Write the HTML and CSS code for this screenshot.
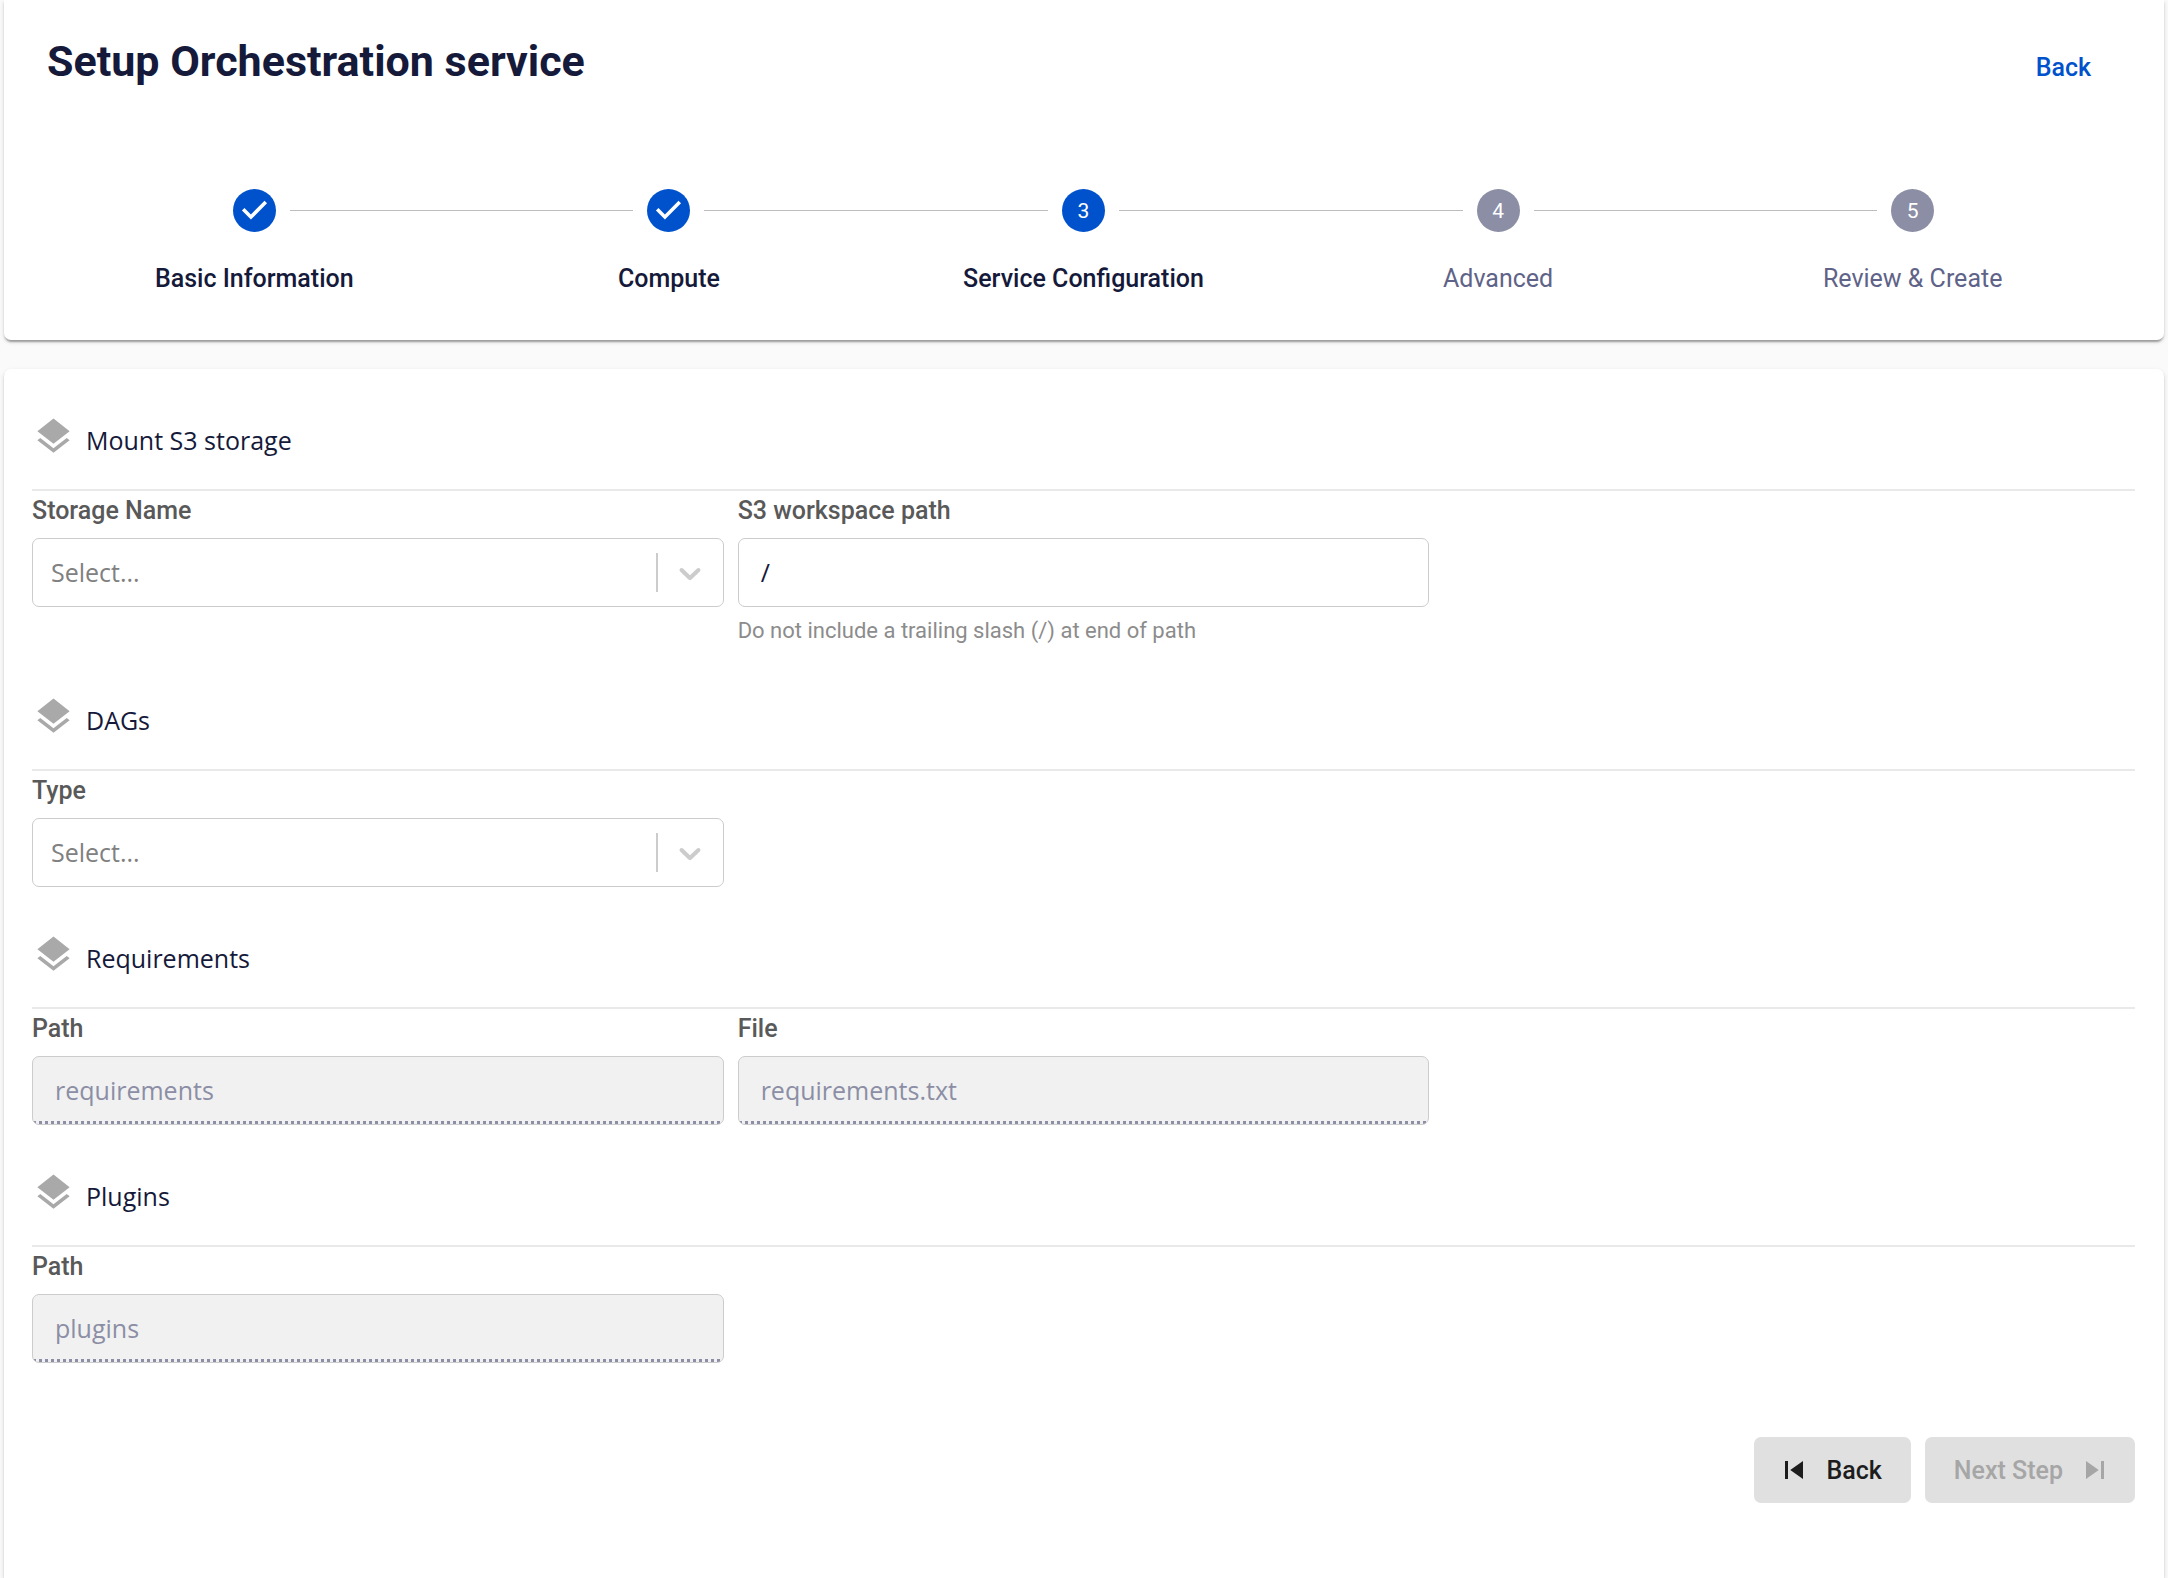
FILE: index.html
```html
<!DOCTYPE html>
<html lang="en">
<head>
    <meta charset="UTF-8">
    <meta name="viewport" content="width=device-width, initial-scale=1.0">
    <title>Setup Orchestration service</title>
    <link rel="stylesheet" href="styles.css">
</head>
<body>
    <!-- shared icons -->
    <svg class="icon-defs" aria-hidden="true">
        <symbol id="icon-layers" viewBox="0 0 24 24">
            <path d="M11.99 18.54l-7.37-5.73L3 14.07l9 7 9-7-1.63-1.27-7.38 5.74zM12 16l7.36-5.73L21 9l-9-7-9 7 1.63 1.27L12 16z"/>
        </symbol>
        <symbol id="icon-chevron" viewBox="0 0 20 20">
            <path d="M4.516 7.548c0.436-0.446 1.043-0.481 1.576 0l3.908 3.747 3.908-3.747c0.533-0.481 1.141-0.446 1.574 0 0.436 0.445 0.408 1.197 0 1.615-0.406 0.418-4.695 4.502-4.695 4.502-0.217 0.223-0.502 0.335-0.787 0.335s-0.57-0.112-0.789-0.335c0 0-4.287-4.084-4.695-4.502s-0.436-1.17 0-1.615z"/>
        </symbol>
        <symbol id="icon-check" viewBox="0 0 24 24">
            <path d="M10 17l-5-5 1.400-1.400 3.600 3.600 7.600-7.600L19 8z"/>
        </symbol>
    </svg>

    <header class="card header">
        <div class="title-row">
            <h1>Setup Orchestration service</h1>
            <a class="back-link" href="#">Back</a>
        </div>

        <ol class="stepper">
            <li class="step done">
                <span class="step-icon"><svg><use href="#icon-check"/></svg></span>
                <span class="step-label">Basic Information</span>
            </li>
            <li class="step done">
                <span class="step-icon"><svg><use href="#icon-check"/></svg></span>
                <span class="step-label">Compute</span>
            </li>
            <li class="step active" aria-current="step">
                <span class="step-icon">3</span>
                <span class="step-label">Service Configuration</span>
            </li>
            <li class="step">
                <span class="step-icon">4</span>
                <span class="step-label">Advanced</span>
            </li>
            <li class="step">
                <span class="step-icon">5</span>
                <span class="step-label">Review &amp; Create</span>
            </li>
        </ol>
    </header>

    <main class="card content">
        <form>
            <section>
                <h2 class="section-title"><svg><use href="#icon-layers"/></svg>Mount S3 storage</h2>
                <div class="fields">
                    <div class="field">
                        <label for="storageName">Storage Name</label>
                        <div class="select-box">
                            <select id="storageName">
                                <option>Select...</option>
                            </select>
                            <span class="indicator"><svg><use href="#icon-chevron"/></svg></span>
                        </div>
                    </div>
                    <div class="field">
                        <label for="workspacePath">S3 workspace path</label>
                        <input type="text" id="workspacePath" value="/" aria-describedby="workspaceHelp">
                        <p class="help" id="workspaceHelp">Do not include a trailing slash (/) at end of path</p>
                    </div>
                </div>
            </section>

            <section>
                <h2 class="section-title"><svg><use href="#icon-layers"/></svg>DAGs</h2>
                <div class="fields">
                    <div class="field">
                        <label for="dagType">Type</label>
                        <div class="select-box">
                            <select id="dagType">
                                <option>Select...</option>
                            </select>
                            <span class="indicator"><svg><use href="#icon-chevron"/></svg></span>
                        </div>
                    </div>
                </div>
            </section>

            <section>
                <h2 class="section-title"><svg><use href="#icon-layers"/></svg>Requirements</h2>
                <div class="fields">
                    <div class="field">
                        <label for="reqPath">Path</label>
                        <input type="text" id="reqPath" value="requirements" disabled>
                    </div>
                    <div class="field">
                        <label for="reqFile">File</label>
                        <input type="text" id="reqFile" value="requirements.txt" disabled>
                    </div>
                </div>
            </section>

            <section>
                <h2 class="section-title"><svg><use href="#icon-layers"/></svg>Plugins</h2>
                <div class="fields">
                    <div class="field">
                        <label for="pluginPath">Path</label>
                        <input type="text" id="pluginPath" value="plugins" disabled>
                    </div>
                </div>
            </section>

            <div class="actions">
                <button type="button" class="btn btn-prev">
                    <svg viewBox="0 0 24 24"><path d="M6 6h2v12H6zm3.500 6l8.500 6V6z"/></svg>
                    Back
                </button>
                <button type="submit" class="btn btn-next" disabled>
                    Next Step
                    <svg viewBox="0 0 24 24"><path d="M6 18l8.500-6L6 6v12zM16 6v12h2V6h-2z"/></svg>
                </button>
            </div>
        </form>
    </main>
</body>
</html>
```

FILE: styles.css
```css
* {
    box-sizing: border-box;
}
body {
    display: flex;
    flex-direction: column;
    min-height: 100vh;
    margin: 0;
    padding: 0 4px;
    background: #fafafa;
    color: #15193a;
    font-family: Roboto, sans-serif;
    font-size: 25px;
}
svg {
    display: block;
    fill: currentColor;
}
.icon-defs {
    display: none;
}
.card {
    background: #fff;
    border-radius: 7px;
    box-shadow: 0 4px 2px -2px rgba(0,0,0,0.2), 0 2px 2px rgba(0,0,0,0.14), 0 2px 5px rgba(0,0,0,0.12);
}

/* header and stepper */
.header {
    margin-bottom: 29px;
    padding: 32px 44px 43px 43px;
    border-radius: 0 0 7px 7px;
}
.title-row {
    display: flex;
    justify-content: space-between;
    align-items: baseline;
    padding-right: 29px;
}
h1 {
    margin: 0;
    font-size: 43px;
    font-weight: 700;
    line-height: 58px;
}
.back-link {
    color: #0052cc;
    font-weight: 500;
    text-decoration: none;
}
.stepper {
    display: flex;
    margin: 99px 0 0;
    padding: 0;
    list-style: none;
}
.step {
    display: grid;
    flex: 1;
    grid-template-columns: 1fr 43px 1fr;
    align-items: center;
    column-gap: 14px;
    row-gap: 29px;
    color: #5f6388;
}
.step::before,
.step::after {
    content: "";
    height: 1px;
    background: #bdbdbd;
}
.step:first-child::before,
.step:last-child::after {
    background: none;
}
.step::before {
    order: 0;
}
.step-icon {
    display: flex;
    order: 1;
    align-items: center;
    justify-content: center;
    height: 43px;
    border-radius: 50%;
    background: #8b8ea5;
    color: #fff;
    font-size: 21px;
}
.step::after {
    order: 2;
}
.step-label {
    order: 3;
    grid-column: 1 / -1;
    line-height: 36px;
    text-align: center;
}
.step-icon svg {
    width: 43px;
    height: 43px;
}
.done,
.active {
    color: #15193a;
    font-weight: 500;
}
.done .step-icon,
.active .step-icon {
    background: #0052cc;
    font-weight: 400;
}

/* form sections */
.content {
    flex: 1;
    padding: 0 29px 64px 28px;
    border-radius: 7px 7px 0 0;
}
.section-title {
    display: flex;
    gap: 11px;
    height: 122px;
    margin: 0;
    padding-top: 46px;
    border-bottom: 2px solid #e9e9e9;
    font-family: "Open Sans", sans-serif;
    font-size: 25px;
    font-weight: 400;
    line-height: 50px;
}
.section-title svg {
    width: 43px;
    height: 43px;
    color: #a9a9a9;
}
.fields {
    display: grid;
    grid-template-columns: repeat(3, 1fr);
    gap: 14px;
}
.field label {
    display: block;
    height: 47px;
    color: #595959;
    font-weight: 500;
    line-height: 40px;
}
.field input,
.field select {
    display: block;
    width: 100%;
    height: 69px;
    border: 1px solid #ccc;
    border-radius: 7px;
    background: #fff;
    color: #15193a;
    font-family: "Open Sans", sans-serif;
    font-size: 25px;
}
.field input {
    padding: 0 22px 2px;
}
.field input:disabled {
    background: #f1f1f1 repeating-linear-gradient(90deg, #8b8ea5 0 3px, #f1f1f1 3px 6px) bottom / 100% 3px no-repeat;
    color: #8b8ea5;
}
.field select {
    padding: 0 80px 2px 18px;
    appearance: none;
    color: #808080;
}
.select-box {
    display: grid;
    align-items: center;
}
.select-box select,
.select-box .indicator {
    grid-area: 1 / 1;
}
.indicator {
    display: flex;
    align-items: center;
    justify-self: end;
    height: 39px;
    padding: 0 16px 0 14px;
    border-left: 2px solid #ccc;
    color: #ccc;
    pointer-events: none;
}
.indicator svg {
    width: 36px;
    height: 36px;
}
.help {
    margin: 0;
    padding-top: 6px;
    color: #8c8c8c;
    font-size: 22px;
    line-height: 36px;
}

.actions {
    display: flex;
    justify-content: flex-end;
    gap: 14px;
    margin-top: 74px;
}
.btn {
    display: flex;
    align-items: center;
    gap: 14px;
    height: 66px;
    padding: 0 29px;
    border: none;
    border-radius: 7px;
    background: #e0e0e0;
    color: #1d1d1d;
    font-family: Roboto, sans-serif;
    font-size: 25px;
    font-weight: 500;
}
.btn-prev {
    padding-left: 22px;
}
.btn-next {
    padding-right: 22px;
}
.btn:disabled {
    color: #a6a6a6;
}
.btn svg {
    width: 36px;
    height: 36px;
}
```
